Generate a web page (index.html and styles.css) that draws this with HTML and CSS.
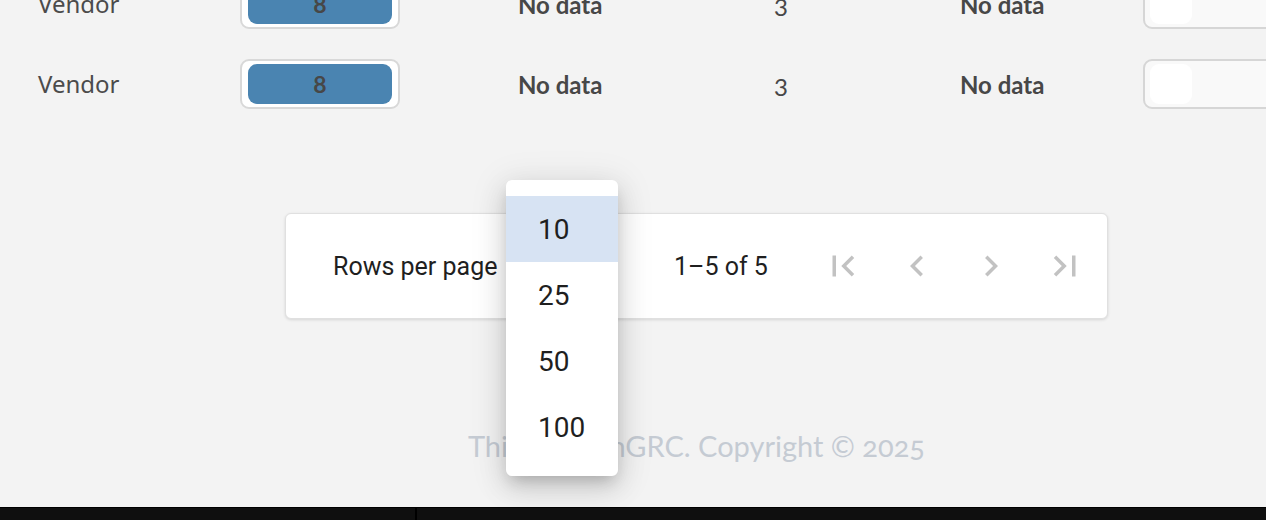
FILE: index.html
```html
<!DOCTYPE html>
<html>
<head>
<meta charset="utf-8">
<link rel="stylesheet" href="styles.css">
</head>
<body>
<div class="viewport">
  <main class="content">
    <div class="table">
      <div class="row">
        <div class="cell label">Vendor</div>
        <div class="cell badge-cell"><div class="badge"><span class="badge-fill">8</span></div></div>
        <div class="cell nodata">No data</div>
        <div class="cell count">3</div>
        <div class="cell nodata second">No data</div>
        <div class="cell toggle-cell"><div class="toggle"><span class="knob"></span></div></div>
      </div>
      <div class="row">
        <div class="cell label">Vendor</div>
        <div class="cell badge-cell"><div class="badge"><span class="badge-fill">8</span></div></div>
        <div class="cell nodata">No data</div>
        <div class="cell count">3</div>
        <div class="cell nodata second">No data</div>
        <div class="cell toggle-cell"><div class="toggle"><span class="knob"></span></div></div>
      </div>
    </div>

    <div class="pager-wrap">
      <div class="pager">
        <span class="rpp">Rows per page</span>
        <span class="range">1–5 of 5</span>
        <div class="icons">
          <svg class="icon" viewBox="0 0 24 24"><path d="M18.41 16.59L13.82 12l4.59-4.59L17 6l-6 6 6 6zM6 6h2v12H6z"/></svg>
          <svg class="icon" viewBox="0 0 24 24"><path d="M15.41 7.41L14 6l-6 6 6 6 1.41-1.41L10.83 12z"/></svg>
          <svg class="icon" viewBox="0 0 24 24"><path d="M10 6L8.59 7.41 13.17 12l-4.58 4.59L10 18l6-6z"/></svg>
          <svg class="icon" viewBox="0 0 24 24"><path d="M5.59 7.41L10.18 12l-4.59 4.59L7 18l6-6-6-6zM16 6h2v12h-2z"/></svg>
        </div>
      </div>
    </div>

    <footer class="footer">This is OpenGRC. Copyright © 2025</footer>
  </main>

  <ul class="menu">
    <li class="item selected">10</li>
    <li class="item">25</li>
    <li class="item">50</li>
    <li class="item">100</li>
  </ul>
</div>
<div class="taskbar"><span class="divider"></span></div>
</body>
</html>
```

FILE: styles.css
```css
* { box-sizing: border-box; }
html, body { margin: 0; padding: 0; }
body {
  width: 1266px;
  height: 520px;
  overflow: hidden;
  background: #f3f3f3;
  font-family: Lato, "Noto Sans", sans-serif;
  display: flex;
  flex-direction: column;
}
.viewport {
  position: relative;
  height: 507px;
  overflow: hidden;
}
.content {
  width: 1393px;
  display: flex;
  flex-direction: column;
}
.table {
  margin-top: -36px;
}
.row {
  height: 80px;
  display: flex;
  align-items: center;
  padding-left: 38px;
}
.cell { flex: none; }
.label {
  width: 202px;
  font-family: "Noto Sans", sans-serif;
  font-size: 24px;
  color: #4b4b4b;
  padding-bottom: 2px;
}
.badge-cell { width: 278px; }
.badge {
  width: 160px;
  height: 50px;
  border: 2px solid #d8d8d8;
  border-radius: 9px;
  background: #fff;
  padding: 3px 6px;
}
.badge-fill {
  display: flex;
  height: 40px;
  border-radius: 9px;
  background: #4a84b1;
  align-items: center;
  justify-content: center;
  font-weight: 700;
  font-size: 23px;
  color: #474747;
}
.nodata {
  width: 222px;
  font-weight: 700;
  font-size: 24px;
  color: #474747;
}
.count {
  width: 82px;
  text-align: center;
  font-size: 24px;
  color: #474747;
  padding-top: 4px;
}
.nodata.second {
  width: 321px;
  padding-left: 138px;
}
.toggle {
  width: 160px;
  height: 50px;
  border: 2px solid #d6d6d6;
  border-radius: 9px;
  background: #f9f9f9;
  padding: 3px 5px;
}
.knob {
  display: block;
  width: 42px;
  height: 40px;
  border-radius: 9px;
  background: #fff;
}
.pager-wrap {
  margin-top: 89px;
  display: flex;
  justify-content: center;
}
.pager {
  width: 823px;
  height: 106px;
  background: #fff;
  border: 1px solid #e0e0e0;
  border-radius: 6px;
  box-shadow: 0 1px 3px rgba(0,0,0,0.12);
  display: flex;
  align-items: center;
  padding-left: 47px;
  font-family: Roboto, sans-serif;
  font-size: 25px;
  color: #1f1f1f;
}
.rpp { width: 341px; }
.range { width: 148px; }
.icons {
  display: flex;
  gap: 32px;
}
.icon {
  width: 42px;
  height: 42px;
  fill: #c2c2c2;
}
.footer {
  margin-top: 109px;
  text-align: center;
  font-family: Lato, sans-serif;
  font-variant-numeric: oldstyle-nums;
  font-size: 29px;
  color: #c5cbd3;
}
.menu {
  position: absolute;
  left: 506px;
  top: 180px;
  width: 112px;
  margin: 0;
  padding: 16px 0;
  list-style: none;
  background: #fff;
  border-radius: 6px;
  box-shadow: 0 8px 15px -5px rgba(0,0,0,0.2), 0 12px 28px 2px rgba(0,0,0,0.10), 0 5px 34px 6px rgba(0,0,0,0.08);
  font-family: Roboto, sans-serif;
  font-size: 28px;
  color: #1f1f1f;
}
.item {
  height: 66px;
  display: flex;
  align-items: center;
  padding-left: 32px;
}
.item.selected { background: #d7e3f3; }
.taskbar {
  position: relative;
  flex: none;
  height: 13px;
  background: #0f0f0f;
  border-top: 1px solid #000;
}
.divider {
  position: absolute;
  left: 415px;
  top: 0;
  bottom: 0;
  width: 2px;
  background: #000;
}
```
